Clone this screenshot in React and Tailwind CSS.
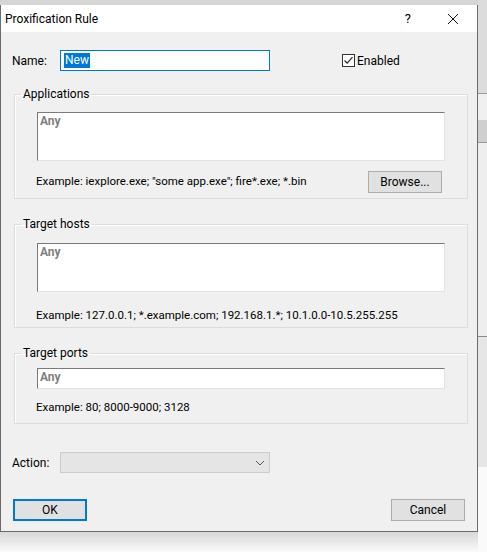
import React from 'react'

function GroupBox({ title, className = '', children }) {
  return (
    <fieldset className={`mx-[13px] w-[454px] border border-[#dcdcdc] shadow-[inset_1px_1px_0_#fff] ${className}`}>
      <legend className="ml-[6px] px-[2px] text-[12px] leading-[14px] text-black">{title}</legend>
      {children}
    </fieldset>
  )
}

function AnyBox({ tall }) {
  return (
    <div
      className={`ml-[22px] w-[408px] bg-white border border-[#7a7a7a] border-r-[#e3e3e3] border-b-[#e3e3e3] px-[2px] pt-[1px] ${
        tall ? 'h-[49px]' : 'h-[21px]'
      }`}
    >
      <div className="text-[12px] font-bold text-[#808080] leading-[15px]">Any</div>
    </div>
  )
}

function Button({ children, primary, className = '' }) {
  return (
    <button
      className={`w-[74px] h-[22px] bg-[#e1e1e1] text-[12px] text-black leading-none ${
        primary ? 'border-2 border-[#0078d7]' : 'border border-[#adadad]'
      } ${className}`}
    >
      {children}
    </button>
  )
}

export default function App() {
  return (
    <div className="w-[487px] h-[552px] bg-[#dadada] flex overflow-hidden font-['Roboto','Noto_Sans',sans-serif]">
      <div className="flex flex-col w-[478px]">
        <div className="h-[5px] bg-[#d6d6d6]" />
        <div className="w-[478px] h-[527px] border-r border-b border-l border-[#6b6b6b] bg-[#f0f0f0] flex flex-col">
          {/* title bar */}
          <div className="h-[27px] bg-white flex items-center">
            <span className="ml-[4px] mt-[1px] text-[12px] text-black">Proxification Rule</span>
            <span className="ml-auto mr-[36px] text-[13px] text-black">?</span>
            <svg width="12" height="12" viewBox="0 0 12 12" className="mr-[18px]">
              <path d="M1 1L11 11M11 1L1 11" stroke="#111" strokeWidth="1" />
            </svg>
          </div>

          {/* name row */}
          <div className="mt-[18px] h-[21px] flex items-center">
            <span className="ml-[11px] w-[48px] text-[12px] text-black">Name:</span>
            <div className="w-[210px] h-[21px] bg-white border border-[#0078d7] flex items-center px-[3px]">
              <span className="bg-[#0078d7] text-white text-[12px] leading-[15px] px-[1px]">New</span>
            </div>
            <div className="ml-[72px] flex items-center">
              <div className="w-[13px] h-[13px] border border-[#333] bg-white flex items-center justify-center">
                <svg width="11" height="11" viewBox="0 0 11 11">
                  <path d="M1.5 5.5L4.2 8.2L9.5 2.2" stroke="#222" strokeWidth="1.1" fill="none" />
                </svg>
              </div>
              <span className="ml-[2px] text-[12px] text-black">Enabled</span>
            </div>
          </div>

          <GroupBox title="Applications" className="mt-[16px] pb-[6px]">
            <div className="mt-[11px]">
              <AnyBox tall />
            </div>
            <div className="mt-[10px] h-[21px] flex items-center">
              <span className="ml-[21px] mt-[1px] text-[11.5px] text-black">
                Example: iexplore.exe; "some app.exe"; fire*.exe; *.bin
              </span>
              <Button className="ml-auto mr-[25px] w-[73px] h-[21px]">Browse...</Button>
            </div>
          </GroupBox>

          <GroupBox title="Target hosts" className="mt-[18px] pb-[4px]">
            <div className="mt-[12px]">
              <AnyBox tall />
            </div>
            <div className="mt-[17px] h-[14px] flex items-center">
              <span className="ml-[21px] text-[11.5px] text-black">
                Example: 127.0.0.1; *.example.com; 192.168.1.*; 10.1.0.0-10.5.255.255
              </span>
            </div>
          </GroupBox>

          <GroupBox title="Target ports" className="mt-[18px] pb-[8px]">
            <div className="mt-[8px]">
              <AnyBox />
            </div>
            <div className="mt-[12px] h-[14px] flex items-center">
              <span className="ml-[21px] text-[11.5px] text-black">Example: 80; 8000-9000; 3128</span>
            </div>
          </GroupBox>

          {/* action row */}
          <div className="mt-[28px] h-[21px] flex items-center">
            <span className="ml-[11px] w-[48px] text-[12px] text-black">Action:</span>
            <div className="w-[210px] h-[21px] bg-[#e5e5e5] border border-[#cccccc] flex items-center justify-end pr-[4px]">
              <svg width="10" height="6" viewBox="0 0 10 6">
                <path d="M1 1L5 5L9 1" stroke="#555" strokeWidth="1" fill="none" />
              </svg>
            </div>
          </div>

          {/* buttons */}
          <div className="mt-[26px] flex">
            <Button primary className="ml-[12px]">OK</Button>
            <Button className="ml-auto mr-[12px]">Cancel</Button>
          </div>
        </div>
        <div className="flex-1 bg-gradient-to-b from-[#d8d8d8] to-[#fbfbfb]" />
      </div>

      {/* background window strip */}
      <div className="flex-1 flex flex-col bg-[#e9e9e9]">
        <div className="h-[93px] bg-[#dcdcdc]" />
        <div className="h-[1px] bg-[#9a9a9a]" />
        <div className="h-[26px] bg-[#f0f0f0]" />
        <div className="h-[22px] bg-[#cfcfcf]" />
        <div className="h-[1px] bg-[#9a9a9a]" />
        <div className="h-[193px] bg-[#eeeeee]" />
        <div className="h-[1px] bg-[#8a8a8a]" />
        <div className="h-[130px] bg-[#e6e6e6]" />
        <div className="flex-1 bg-[#fafafa]" />
      </div>
    </div>
  )
}
